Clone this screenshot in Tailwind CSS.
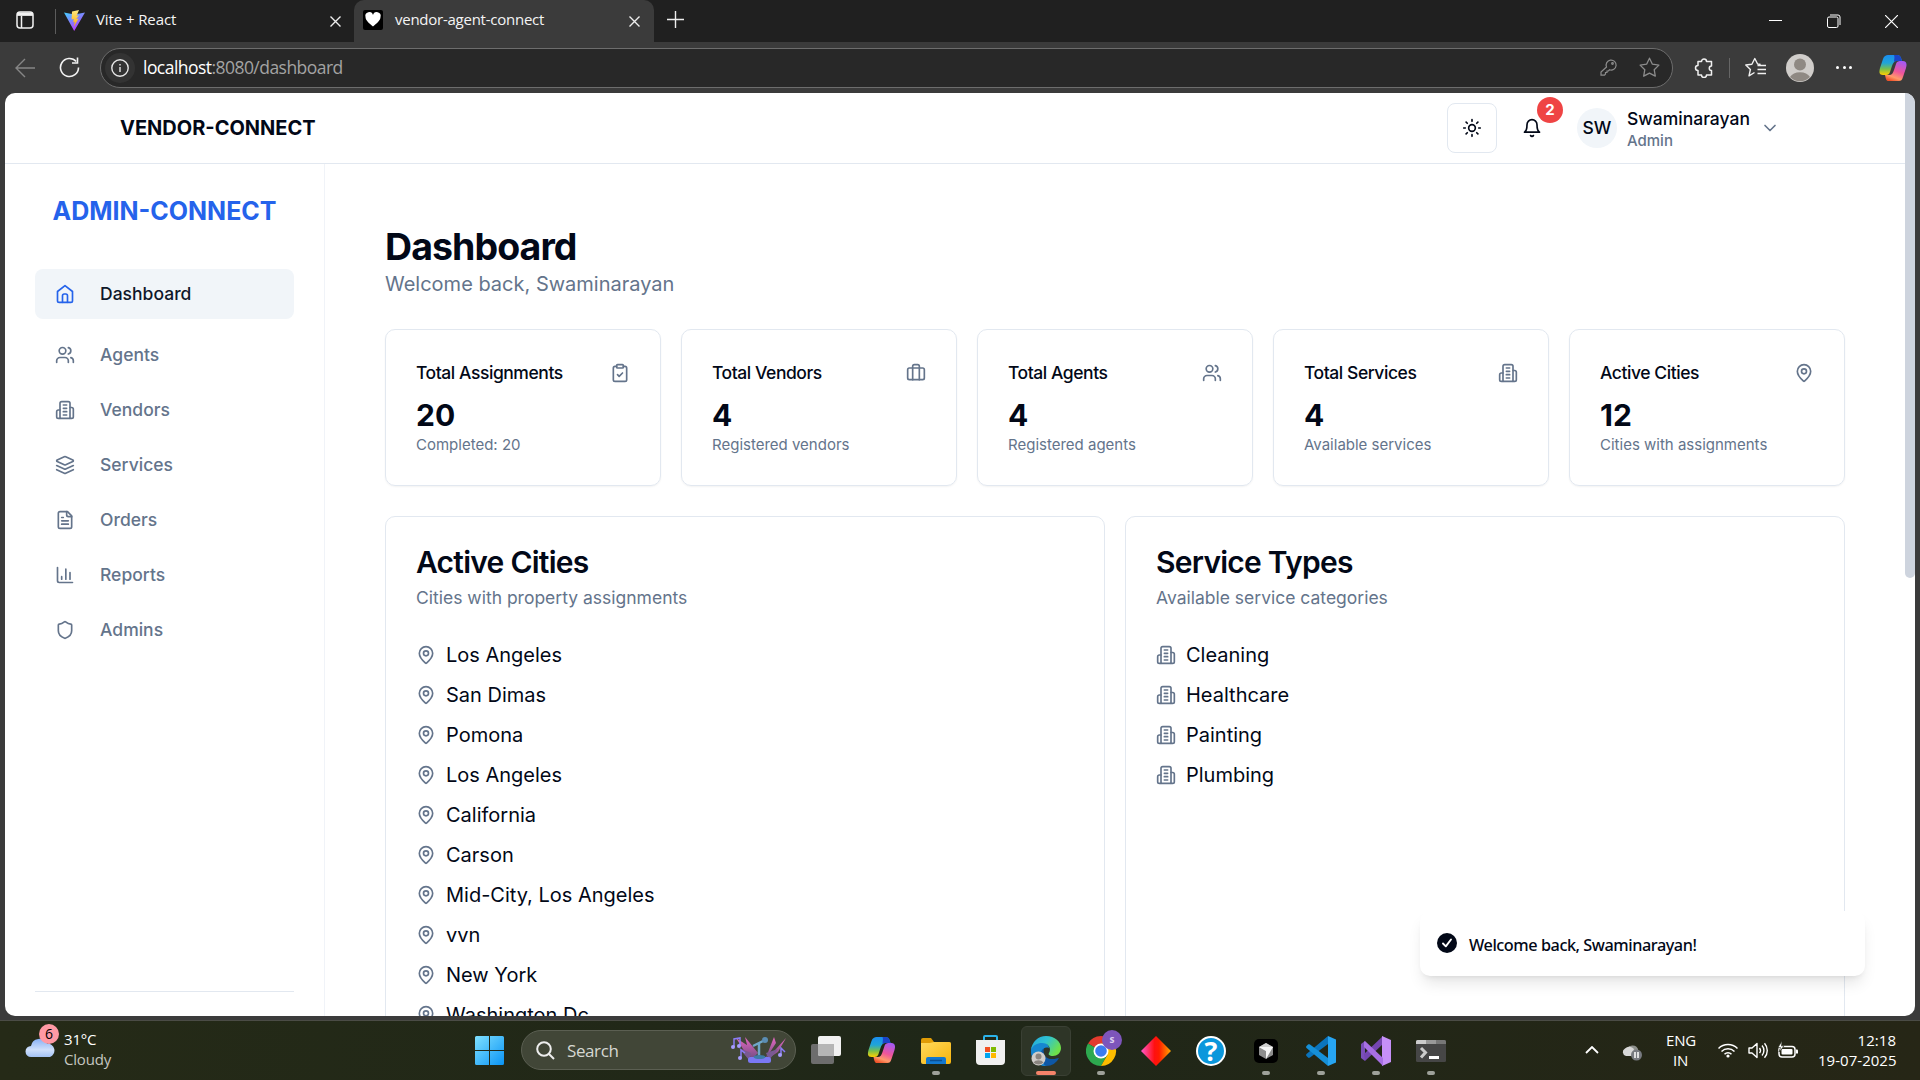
<!DOCTYPE html>
<html lang="en">
<head>
<meta charset="utf-8">
<title>vendor-agent-connect</title>
<script src="https://cdn.jsdelivr.net/npm/@tailwindcss/browser@4"></script>
</head>
<body class="w-[1920px] h-[1080px] overflow-hidden bg-[#3b3b3b] font-['Inter',sans-serif] flex flex-col">
<svg class="absolute size-0" xmlns="http://www.w3.org/2000/svg">
  <defs>
    <symbol id="house" viewBox="0 0 24 24"><path d="m3 9 9-7 9 7v11a2 2 0 0 1-2 2H5a2 2 0 0 1-2-2z"/><path d="M9 22V14a2 2 0 0 1 2-2h2a2 2 0 0 1 2 2v8"/></symbol>
    <symbol id="users" viewBox="0 0 24 24"><path d="M16 21v-2a4 4 0 0 0-4-4H6a4 4 0 0 0-4 4v2"/><circle cx="9" cy="7" r="4"/><path d="M22 21v-2a4 4 0 0 0-3-3.870"/><path d="M16 3.130a4 4 0 0 1 0 7.750"/></symbol>
    <symbol id="building" viewBox="0 0 24 24"><path d="M6 22V4a2 2 0 0 1 2-2h8a2 2 0 0 1 2 2v18Z"/><path d="M6 12H4a2 2 0 0 0-2 2v6a2 2 0 0 0 2 2h2"/><path d="M18 9h2a2 2 0 0 1 2 2v9a2 2 0 0 1-2 2h-2"/><path d="M10 6h4M10 10h4M10 14h4M10 18h4"/></symbol>
    <symbol id="layers" viewBox="0 0 24 24"><path d="m12.830 2.180a2 2 0 0 0-1.660 0L2.600 6.080a1 1 0 0 0 0 1.830l8.580 3.910a2 2 0 0 0 1.660 0l8.580-3.900a1 1 0 0 0 0-1.830Z"/><path d="m22 17.650-9.170 4.160a2 2 0 0 1-1.660 0L2 17.650"/><path d="m22 12.650-9.170 4.160a2 2 0 0 1-1.660 0L2 12.650"/></symbol>
    <symbol id="filetext" viewBox="0 0 24 24"><path d="M15 2H6a2 2 0 0 0-2 2v16a2 2 0 0 0 2 2h12a2 2 0 0 0 2-2V7Z"/><path d="M14 2v4a2 2 0 0 0 2 2h4M10 9H8M16 13H8M16 17H8"/></symbol>
    <symbol id="chart" viewBox="0 0 24 24"><path d="M3 3v16a2 2 0 0 0 2 2h16M18 17V9M13 17V5M8 17v-3"/></symbol>
    <symbol id="shield" viewBox="0 0 24 24"><path d="M20 13c0 5-3.500 7.500-7.660 8.950a1 1 0 0 1-.67-.01C7.500 20.500 4 18 4 13V6a1 1 0 0 1 1-1c2 0 4.500-1.200 6.240-2.720a1.170 1.170 0 0 1 1.520 0C14.510 3.810 17 5 19 5a1 1 0 0 1 1 1z"/></symbol>
    <symbol id="clipboard" viewBox="0 0 24 24"><rect width="8" height="4" x="8" y="2" rx="1"/><path d="M16 4h2a2 2 0 0 1 2 2v14a2 2 0 0 1-2 2H6a2 2 0 0 1-2-2V6a2 2 0 0 1 2-2h2"/><path d="m9 14 2 2 4-4"/></symbol>
    <symbol id="case" viewBox="0 0 24 24"><path d="M16 20V4a2 2 0 0 0-2-2h-4a2 2 0 0 0-2 2v16"/><rect width="20" height="14" x="2" y="6" rx="2"/></symbol>
    <symbol id="pin" viewBox="0 0 24 24"><path d="M20 10c0 4.993-5.539 10.193-7.399 11.799a1 1 0 0 1-1.202 0C9.539 20.193 4 14.993 4 10a8 8 0 0 1 16 0"/><circle cx="12" cy="10" r="3"/></symbol>
    <symbol id="sun" viewBox="0 0 24 24"><circle cx="12" cy="12" r="4"/><path d="M12 2v2M12 20v2m-7.070-17.070 1.410 1.410m11.320 11.320 1.410 1.410M2 12h2m16 0h2M6.340 17.660l-1.410 1.410M19.070 4.930l-1.410 1.410"/></symbol>
    <symbol id="bell" viewBox="0 0 24 24"><path d="M6 8a6 6 0 0 1 12 0c0 7 3 9 3 9H3s3-2 3-9"/><path d="M10.300 21a1.940 1.940 0 0 0 3.400 0"/></symbol>
    <symbol id="down" viewBox="0 0 24 24"><path d="m6 9 6 6 6-6"/></symbol>
    <symbol id="copilot" viewBox="0 0 28 26">
      <path d="M9 0h9c3 0 4 2 5 6h-5c-3 0-4 2-5 5l-2 6c-1 3-3 3-5 3H4c-4 0-4-3-3-7l3-9C5 1 7 0 9 0z" fill="url(#cpA)"/>
      <path d="M15 0h3c3 0 4 2 5 6h-5c-1 0-2 0-3 1 0-3 1-5 0-7z" fill="#1b44c8"/>
      <path d="M19 26h-9c-3 0-3-2-4-6h4c3 0 4-2 5-5l2-6c1-3 3-3 5-3h2c4 0 4 4 3 7l-3 9c-1 3-2 4-4 4z" fill="url(#cpB)"/>
    </symbol>
    <linearGradient id="cpA" x1="0" y1="0" x2="0" y2="1"><stop offset="0" stop-color="#1a8df0"/><stop offset=".4" stop-color="#20a5d8"/><stop offset=".7" stop-color="#79c04a"/><stop offset="1" stop-color="#ffd000"/></linearGradient>
    <linearGradient id="cpB" x1=".7" y1="0" x2=".3" y2="1"><stop offset="0" stop-color="#a559f2"/><stop offset=".5" stop-color="#f0559a"/><stop offset=".8" stop-color="#ff9a6a"/><stop offset="1" stop-color="#f0542a"/></linearGradient>
    <linearGradient id="vite" x1="0" y1="0" x2=".6" y2="1"><stop offset="0" stop-color="#41d1ff"/><stop offset="1" stop-color="#bd34fe"/></linearGradient>
    <linearGradient id="bolt" x1="0" y1="0" x2="0" y2="1"><stop offset="0" stop-color="#ffea83"/><stop offset="1" stop-color="#ffa800"/></linearGradient>
    <linearGradient id="win" x1="0" y1="0" x2="1" y2="1"><stop offset="0" stop-color="#7fe0ff"/><stop offset="1" stop-color="#0a94f5"/></linearGradient>
    <linearGradient id="cloud" x1="0" y1="0" x2="0" y2="1"><stop offset="0" stop-color="#88b0f4"/><stop offset=".6" stop-color="#cfe0fb"/><stop offset="1" stop-color="#a3c2f4"/></linearGradient>
    <linearGradient id="edgeTop" x1="0" y1="0" x2="1" y2=".5"><stop offset="0" stop-color="#22a5dc"/><stop offset=".5" stop-color="#2fc3d3"/><stop offset="1" stop-color="#6ee04a"/></linearGradient>
    <linearGradient id="diamond" x1="0" y1="0" x2="1" y2="0"><stop offset="0" stop-color="#ff5ad0"/><stop offset=".45" stop-color="#ff1010"/><stop offset=".6" stop-color="#ff1a00"/><stop offset="1" stop-color="#ffa800"/></linearGradient>
    <linearGradient id="folder" x1="0" y1="0" x2="1" y2="1"><stop offset="0" stop-color="#ffd95c"/><stop offset="1" stop-color="#f8b50c"/></linearGradient>
    <linearGradient id="leafA" x1="0" y1="0" x2="0" y2="1"><stop offset="0" stop-color="#e667c0"/><stop offset="1" stop-color="#6c4c80"/></linearGradient>
  </defs>
</svg>

<!-- Tab strip -->
<div class="h-[42px] bg-[#202020] flex items-center shrink-0 font-['Open_Sans','Noto_Sans',sans-serif] text-[15px] text-[#f4f4f4]">
  <svg class="ml-4 size-[18px] mt-[-2px]" viewBox="0 0 18 18" fill="none" stroke="#f2f2f2" stroke-width="1.500"><rect x="1" y="1" width="16" height="16" rx="3"/><path d="M1 4h16M5.500 5v12" /><path d="M1.500 3h15" stroke-width="3"/></svg>
  <div class="ml-[21px] w-px h-[25px] bg-[#5c5c5c]"></div>
  <svg class="ml-2 size-[21px] mt-[-2px]" viewBox="0 0 21 21"><path d="M0 2.500 10.200 21 21 2.500 10.500 4.500z" fill="url(#vite)"/><path d="M15 0 8 1.400 7.600 9.500l2.200-.5-.6 3.200 1.600-.5-1 5 4.800-8.200-2.400.4L15 5.300l-2.400.4z" fill="url(#bolt)"/></svg>
  <div class="ml-[11px] w-[229px] tracking-[-0.1px] mt-[-3px]">Vite + React</div>
  <svg class="ml-[5px] size-[11px]" viewBox="0 0 11 11" stroke="#eee" stroke-width="1.400"><path d="m.5.500 10 10M10.500.500l-10 10"/></svg>
  <div class="ml-[13px] w-[300px] h-[43px] bg-[#3b3b3b] rounded-t-[10px] flex items-center relative">
    <svg class="ml-[9px] size-5 mt-[-3px]" viewBox="0 0 20 20"><rect width="20" height="20" rx="2" fill="#000"/><path d="M10 16.500C6 13 2.500 10.500 2.500 7A3.700 3.700 0 0 1 10 5a3.700 3.700 0 0 1 7.500 2c0 3.500-3.500 6-7.500 9.500z" fill="#fff"/></svg>
    <div class="ml-3 w-[220px] tracking-[-0.25px] mt-[-3px]">vendor-agent-connect</div>
    <svg class="ml-[14px] size-[11px]" viewBox="0 0 11 11" stroke="#eee" stroke-width="1.400"><path d="m.5.500 10 10M10.500.500l-10 10"/></svg>
  </div>
  <svg class="ml-[13px] size-[17px] mt-[-3px]" viewBox="0 0 17 17" stroke="#eee" stroke-width="1.400"><path d="M8.500 0v17M0 8.500h17"/></svg>
  <svg class="ml-auto mr-[45px] size-[13px] mt-[-1px]" viewBox="0 0 13 13" stroke="#fff"><path d="M0 6.500h13"/></svg>
  <svg class="mr-[44px] size-[14px]" viewBox="0 0 14 14" fill="none" stroke="#fff"><rect x=".5" y="3" width="10.500" height="10.500" rx="1.500"/><path d="M3 1h8a2 2 0 0 1 2 2v8"/></svg>
  <svg class="mr-[22px] size-[13px]" viewBox="0 0 13 13" stroke="#fff" stroke-width="1.200"><path d="m0 0 13 13M13 0 0 13"/></svg>
</div>

<!-- Address row -->
<div class="h-[51px] shrink-0 flex items-center font-['Open_Sans','Noto_Sans',sans-serif]">
  <svg class="ml-[15px] size-5" viewBox="0 0 20 20" fill="none" stroke="#868686" stroke-width="1.400"><path d="M20 10H1M10 1 1 10l9 9"/></svg>
  <svg class="ml-[24px] size-[21px]" viewBox="0 0 21 21" fill="none" stroke="#f2f2f2" stroke-width="1.600"><path d="M19.500 10.500a9 9 0 1 1-2.300-6"/><path d="M18.500.500v5.500h-5.500"/></svg>
  <div class="ml-5 w-[1573px] h-10 rounded-full border border-[#6d6d6d] bg-[#282828] flex items-center">
    <div class="ml-1 size-[30px] rounded-full bg-[#333] flex items-center justify-center">
      <svg class="size-[18px]" viewBox="0 0 18 18" fill="none" stroke="#e6e6e6" stroke-width="1.400"><circle cx="9" cy="9" r="8.200"/><path d="M9 8v5M9 5v1.500"/></svg>
    </div>
    <div class="ml-2 text-[17.5px] tracking-[-0.54px] text-[#a3a3a3]"><span class="text-white">localhost</span>:8080/dashboard</div>
    <svg class="ml-auto mr-[22px] size-[17px]" viewBox="0 0 17 17" fill="none" stroke="#8c8c8c" stroke-width="1.200"><path d="M6.500 8A5 5 0 1 1 9.500 10.800L8.500 12H7v1.500H5.500V15l-1 1.200H1V13z"/><circle cx="12.500" cy="4.500" r=".8"/></svg>
    <svg class="mr-[12px] size-[21px]" viewBox="0 0 21 21" fill="none" stroke="#8c8c8c" stroke-width="1.300" stroke-linejoin="round"><path d="m10.500 1.200 2.900 6 6.500.9-4.700 4.600 1.100 6.500-5.800-3-5.800 3 1.100-6.500L1.100 8.100l6.500-.9z"/></svg>
  </div>
  <svg class="ml-[21px] size-5" viewBox="0 0 20 20" fill="none" stroke="#f0f0f0" stroke-width="1.500" stroke-linejoin="round"><path d="M4 3.500h3.500a2.500 2.500 0 0 1 5 0H17.500v4.500c-3 0-3 4.500 0 4.500v4.500h-5a2.500 2.500 0 0 1-5 0H4v-4.500a2.500 2.500 0 0 1 0-5z"/></svg>
  <div class="ml-[15px] w-px h-5 bg-[#666]"></div>
  <svg class="ml-[15px] size-[21px]" viewBox="0 0 21 21" fill="none" stroke="#f0f0f0" stroke-width="1.400" stroke-linejoin="round"><path d="M9.500 15.500 4 18.800l1.400-6.300L.8 8l6.100-.8L9.800 1.500l2.800 5.500 3 .5M12.500 8.500H21M12.500 12.500H21M12.500 16.500H21"/></svg>
  <svg class="ml-5 size-7" viewBox="0 0 28 28"><circle cx="14" cy="14" r="14" fill="#d0cdca"/><circle cx="14" cy="10.500" r="6" fill="#8f8983"/><path d="M4 23a11 8 0 0 1 20 0 14 14 0 0 1-20 0z" fill="#8f8983"/></svg>
  <div class="ml-[22px] flex gap-[3.500px]"><i class="size-[3px] rounded-full bg-white"></i><i class="size-[3px] rounded-full bg-white"></i><i class="size-[3px] rounded-full bg-white"></i></div>
  <svg class="ml-[27px] w-7 h-[26px]"><use href="#copilot"/></svg>
</div>

<!-- Page -->
<div class="mx-[5px] h-[923px] shrink-0 bg-white rounded-[10px] overflow-hidden relative flex text-[#020817]">
  <div class="flex-1 flex flex-col min-w-0">
    <header class="h-[71px] shrink-0 border-b border-[#e2e8f0] flex items-center pl-[115px] pr-[125px]">
      <div class="text-[20px] font-bold">VENDOR-CONNECT</div>
      <div class="ml-auto size-[50px] rounded-lg border border-[#e2e8f0] flex items-center justify-center">
        <svg class="size-5" fill="none" stroke="currentColor" stroke-width="2" stroke-linecap="round"><use href="#sun"/></svg>
      </div>
      <div class="relative ml-[25px]">
        <svg class="size-5" fill="none" stroke="currentColor" stroke-width="2" stroke-linecap="round" stroke-linejoin="round"><use href="#bell"/></svg>
        <div class="absolute left-[15px] top-[-21px] size-[26px] rounded-full bg-[#ef4444] text-white text-[15px] font-bold flex items-center justify-center">2</div>
      </div>
      <div class="ml-[35px] size-10 rounded-full bg-[#f1f5f9] flex items-center justify-center text-[17.5px] font-medium">SW</div>
      <div class="ml-[10px] w-[123px] pt-[5px]">
        <div class="text-[17.5px] leading-[17.5px] font-medium">Swaminarayan</div>
        <div class="mt-[4px] text-[15px] leading-5 font-medium text-[#64748b]">Admin</div>
      </div>
      <svg class="ml-[10px] size-5 text-[#64748b]" fill="none" stroke="currentColor" stroke-width="2" stroke-linecap="round" stroke-linejoin="round"><use href="#down"/></svg>
    </header>
    <div class="flex flex-1 min-h-0">
      <aside class="w-80 shrink-0 border-r border-[#f0f3f8] px-[30px] flex flex-col pb-[24px]">
        <div class="mt-[29px] h-[37px] text-[25px] leading-[37px] font-bold text-[#2563eb] text-center">ADMIN-CONNECT</div>
        <nav class="mt-[39px] flex flex-col text-[17.5px] font-medium tracking-[0.02px] text-[#64748b] [&_svg]:size-5 [&_svg]:-mt-px [&_svg]:fill-none [&_svg]:stroke-current [&_svg]:stroke-2">
          <a class="w-[259px] h-[50px] rounded-lg bg-[#f1f5f9] flex items-center gap-[25px] pl-5 text-[#0f172a]"><svg class="text-[#2563eb]" stroke-linecap="round" stroke-linejoin="round"><use href="#house"/></svg><span class="pt-px">Dashboard</span></a>
          <a class="mt-[11px] h-[50px] flex items-center gap-[25px] pl-5"><svg stroke-linecap="round" stroke-linejoin="round"><use href="#users"/></svg>Agents</a>
          <a class="mt-[5px] h-[50px] flex items-center gap-[25px] pl-5"><svg stroke-linecap="round" stroke-linejoin="round"><use href="#building"/></svg>Vendors</a>
          <a class="mt-[5px] h-[50px] flex items-center gap-[25px] pl-5"><svg stroke-linecap="round" stroke-linejoin="round"><use href="#layers"/></svg>Services</a>
          <a class="mt-[5px] h-[50px] flex items-center gap-[25px] pl-5"><svg stroke-linecap="round" stroke-linejoin="round"><use href="#filetext"/></svg>Orders</a>
          <a class="mt-[5px] h-[50px] flex items-center gap-[25px] pl-5"><svg stroke-linecap="round" stroke-linejoin="round"><use href="#chart"/></svg>Reports</a>
          <a class="mt-[5px] h-[50px] flex items-center gap-[25px] pl-5"><svg stroke-linecap="round" stroke-linejoin="round"><use href="#shield"/></svg>Admins</a>
        </nav>
        <div class="mt-auto h-px w-[259px] bg-[#e2e8f0]"></div>
      </aside>
      <main class="flex-1 min-w-0 pl-[60px] pr-[60px] pt-[60px] overflow-hidden">
        <h1 class="text-[37.5px] leading-[45px] font-bold tracking-[-0.94px]">Dashboard</h1>
        <p class="text-[20px] leading-[30px] text-[#64748b]">Welcome back, Swaminarayan</p>
        <div class="mt-[30px] grid grid-cols-5 gap-5 [&_svg]:size-5 [&_svg]:-mt-px [&_svg]:fill-none [&_svg]:stroke-[#64748b] [&_svg]:stroke-2">
          <div class="h-[157px] rounded-[10px] border border-[#e2e8f0] shadow-xs p-[30px]">
            <div class="flex items-center justify-between h-[27px] text-[17.5px] font-medium tracking-[-0.44px]">Total Assignments<svg stroke-linecap="round" stroke-linejoin="round"><use href="#clipboard"/></svg></div>
            <div class="mt-2 text-[30px] leading-10 font-bold">20</div>
            <div class="text-[15px] leading-5 text-[#64748b]">Completed: 20</div>
          </div>
          <div class="h-[157px] rounded-[10px] border border-[#e2e8f0] shadow-xs p-[30px]">
            <div class="flex items-center justify-between h-[27px] text-[17.5px] font-medium tracking-[-0.44px]">Total Vendors<svg stroke-linecap="round" stroke-linejoin="round"><use href="#case"/></svg></div>
            <div class="mt-2 text-[30px] leading-10 font-bold">4</div>
            <div class="text-[15px] leading-5 text-[#64748b]">Registered vendors</div>
          </div>
          <div class="h-[157px] rounded-[10px] border border-[#e2e8f0] shadow-xs p-[30px]">
            <div class="flex items-center justify-between h-[27px] text-[17.5px] font-medium tracking-[-0.44px]">Total Agents<svg stroke-linecap="round" stroke-linejoin="round"><use href="#users"/></svg></div>
            <div class="mt-2 text-[30px] leading-10 font-bold">4</div>
            <div class="text-[15px] leading-5 text-[#64748b]">Registered agents</div>
          </div>
          <div class="h-[157px] rounded-[10px] border border-[#e2e8f0] shadow-xs p-[30px]">
            <div class="flex items-center justify-between h-[27px] text-[17.5px] font-medium tracking-[-0.44px]">Total Services<svg stroke-linecap="round" stroke-linejoin="round"><use href="#building"/></svg></div>
            <div class="mt-2 text-[30px] leading-10 font-bold">4</div>
            <div class="text-[15px] leading-5 text-[#64748b]">Available services</div>
          </div>
          <div class="h-[157px] rounded-[10px] border border-[#e2e8f0] shadow-xs p-[30px]">
            <div class="flex items-center justify-between h-[27px] text-[17.5px] font-medium tracking-[-0.44px]">Active Cities<svg stroke-linecap="round" stroke-linejoin="round"><use href="#pin"/></svg></div>
            <div class="mt-2 text-[30px] leading-10 font-bold">12</div>
            <div class="text-[15px] leading-5 text-[#64748b]">Cities with assignments</div>
          </div>
        </div>
        <div class="mt-[30px] grid grid-cols-2 gap-5 [&_svg]:size-5 [&_svg]:fill-none [&_svg]:stroke-[#64748b] [&_svg]:stroke-2 [&_li]:flex [&_li]:items-center [&_li]:gap-[10px] [&_li]:h-[30px] [&_li]:text-[20px]">
          <section class="h-[600px] rounded-[10px] border border-[#e2e8f0] p-[30px]">
            <h2 class="text-[30px] leading-[30px] font-semibold tracking-[-0.75px]">Active Cities</h2>
            <p class="mt-[8px] text-[17.5px] leading-[25px] text-[#64748b]">Cities with property assignments</p>
            <ul class="mt-[30px] flex flex-col gap-[10px]">
              <li><svg stroke-linecap="round" stroke-linejoin="round"><use href="#pin"/></svg>Los Angeles</li>
              <li><svg stroke-linecap="round" stroke-linejoin="round"><use href="#pin"/></svg>San Dimas</li>
              <li><svg stroke-linecap="round" stroke-linejoin="round"><use href="#pin"/></svg>Pomona</li>
              <li><svg stroke-linecap="round" stroke-linejoin="round"><use href="#pin"/></svg>Los Angeles</li>
              <li><svg stroke-linecap="round" stroke-linejoin="round"><use href="#pin"/></svg>California</li>
              <li><svg stroke-linecap="round" stroke-linejoin="round"><use href="#pin"/></svg>Carson</li>
              <li><svg stroke-linecap="round" stroke-linejoin="round"><use href="#pin"/></svg>Mid-City, Los Angeles</li>
              <li><svg stroke-linecap="round" stroke-linejoin="round"><use href="#pin"/></svg>vvn</li>
              <li><svg stroke-linecap="round" stroke-linejoin="round"><use href="#pin"/></svg>New York</li>
              <li><svg stroke-linecap="round" stroke-linejoin="round"><use href="#pin"/></svg>Washington Dc</li>
            </ul>
          </section>
          <section class="h-[600px] rounded-[10px] border border-[#e2e8f0] p-[30px]">
            <h2 class="text-[30px] leading-[30px] font-semibold tracking-[-0.75px]">Service Types</h2>
            <p class="mt-[8px] text-[17.5px] leading-[25px] text-[#64748b]">Available service categories</p>
            <ul class="mt-[30px] flex flex-col gap-[10px]">
              <li><svg stroke-linecap="round" stroke-linejoin="round"><use href="#building"/></svg>Cleaning</li>
              <li><svg stroke-linecap="round" stroke-linejoin="round"><use href="#building"/></svg>Healthcare</li>
              <li><svg stroke-linecap="round" stroke-linejoin="round"><use href="#building"/></svg>Painting</li>
              <li><svg stroke-linecap="round" stroke-linejoin="round"><use href="#building"/></svg>Plumbing</li>
            </ul>
          </section>
        </div>
      </main>
    </div>
  </div>
  <div class="w-[10px] shrink-0"><div class="h-[485px] bg-[#ced4de] rounded-b-[5px]"></div></div>
  <div class="absolute right-[50px] bottom-10 w-[445px] h-[65px] rounded-[10px] bg-white shadow-[0_10px_15px_-3px_rgba(0,0,0,0.1),0_4px_6px_-4px_rgba(0,0,0,0.1)] flex items-center pl-[17px] font-['Noto_Sans',sans-serif] text-[16.25px] font-medium">
    <svg class="size-5 mt-[-1px]" viewBox="0 0 20 20"><circle cx="10" cy="10" r="10" fill="#020817"/><path d="m6 10.500 2.800 2.800L14 6.500" fill="none" stroke="#fff" stroke-width="1.900" stroke-linecap="round" stroke-linejoin="round"/></svg>
    <span class="ml-[12px] mt-[4px] tracking-[-0.45px]">Welcome back, Swaminarayan!</span>
  </div>
</div>
<div class="h-[4px] shrink-0"></div>

<!-- Taskbar -->
<div class="h-[60px] shrink-0 border-t border-[#4b4c46] bg-linear-to-r from-[#252a17] via-[#1f2718] to-[#262616] flex items-center font-['Open_Sans','Noto_Sans',sans-serif] text-[15px] text-white">
  <div class="relative ml-[25px] w-[30px] h-[24px] mt-[-12px]">
    <svg class="w-[30px] h-6 mt-1" viewBox="0 0 30 24"><path d="M6 20a5.500 5.500 0 0 1 0-11 8.500 8.500 0 0 1 16-2.500A7 7 0 0 1 25 20z" fill="url(#cloud)"/></svg>
    <div class="absolute left-[14px] top-[-9px] size-5 rounded-full bg-[#ff99a4] text-black text-[14px] leading-5 text-center">6</div>
  </div>
  <div class="ml-[9px] w-[411px] leading-5 tracking-[-0.2px] mt-[-4px]"><div>31°C</div><div class="text-[#c4c6c0]">Cloudy</div></div>
  <svg class="size-[29px]" viewBox="0 0 29 29" fill="url(#win)"><path d="M0 1.500A1.500 1.500 0 0 1 1.500 0H14v14H0zM15 0h12.500A1.500 1.500 0 0 1 29 1.500V14H15zM0 15h14v14H1.500A1.500 1.500 0 0 1 0 27.500zM15 15h14v12.500a1.500 1.500 0 0 1-1.500 1.500H15z"/></svg>
  <div class="ml-[17px] w-[275px] h-10 mt-[-1px] rounded-full border border-[#5b5f52] bg-[#414637] flex items-center">
    <svg class="ml-[14px] size-[19px]" viewBox="0 0 19 19" fill="none" stroke="#eee" stroke-width="2"><circle cx="8" cy="8" r="6.800"/><path d="m13 13 5 5"/></svg>
    <span class="ml-[12px] mt-[1px] text-[17px] tracking-[-0.4px] text-[#d6d8d2]">Search</span>
    <svg class="ml-auto mr-[8px] w-14 h-[28px]" viewBox="0 0 56 28">
      <path d="M19 24 5 2l14 9zM20 24 14 1l13 16zM34 24 43 1l2 6zM35 24 55 2l-8 14z" fill="url(#leafA)"/><path d="M18 24 8 12l12 5zM38 24l9-11-12 4z" fill="#7a5a92"/>
      <path d="M28 23V7M22 10l10-5" stroke="#6fa6c8" stroke-width="2.500"/><circle cx="34" cy="4" r="3" fill="#5b8db4"/>
      <rect x="17" y="21" width="23" height="6" rx="2.500" fill="#7b78f5"/><ellipse cx="28.500" cy="21" rx="6" ry="2" fill="#3e7ca8"/>
      <g fill="none" stroke="#8b7cf6" stroke-width="1.500"><path d="M3 11V3l6-1v8M10 22v-8l4 3M50 19v-7l4 4"/></g><g fill="#a79cff"><circle cx="2" cy="11" r="2"/><circle cx="8" cy="10" r="2"/><circle cx="9" cy="22" r="2"/><circle cx="49" cy="19" r="2"/></g>
    </svg>
  </div>
  <!-- Pinned apps, 50px slots -->
  <div class="ml-[5px] flex gap-[5px] items-center [&>div]:relative [&>div]:size-[50px] [&>div]:flex [&>div]:items-center [&>div]:justify-center [&_b]:absolute [&_b]:bottom-[1px] [&_b]:h-1 [&_b]:rounded-full">
    <div><svg class="w-[30px] h-[28px] mt-[-2px]" viewBox="0 0 30 28"><rect y="8" width="23" height="20" rx="2" fill="#6d6d6d"/><rect x="7" width="23" height="20" rx="2" fill="#f1f1f1"/><path d="M7 8h16v12H9a2 2 0 0 1-2-2z" fill="#b5b5b5"/></svg></div>
    <div><svg class="w-[29px] h-[26px] mt-[-2px]"><use href="#copilot"/></svg></div>
    <div><svg class="w-[30px] h-[26px]" viewBox="0 0 30 26"><path d="M0 2a2 2 0 0 1 2-2h8l3 4h15a2 2 0 0 1 2 2v4H0z" fill="#e09c06"/><path d="M0 5h9l4-1h15a2 2 0 0 1 2 2v18a2 2 0 0 1-2 2H2a2 2 0 0 1-2-2z" fill="url(#folder)"/><path d="M5 26v-5a2 2 0 0 1 2-2h16a2 2 0 0 1 2 2v5z" fill="#1378cf"/><path d="M9 22.500h12" stroke="#0b4f93" stroke-width="1.500"/></svg><b class="w-2 bg-[#9ea19a]"></b></div>
    <div><svg class="w-[29px] h-[30px] mt-[-1px] mr-[2px]" viewBox="0 0 29 30"><path d="M8 6V2a1 1 0 0 1 1-1h11a1 1 0 0 1 1 1v4" fill="none" stroke="#2bb3ea" stroke-width="2"/><path d="M0 5h29v21a4 4 0 0 1-4 4H4a4 4 0 0 1-4-4z" fill="#f0f0f0"/><path d="M9 12h5v5H9z" fill="#f25022"/><path d="M15 12h5v5h-5z" fill="#7fba00"/><path d="M9 18h5v5H9z" fill="#00a4ef"/><path d="M15 18h5v5h-5z" fill="#ffb900"/></svg></div>
    <div class="rounded-md bg-[#2e3527] border border-[#3a4034]"><svg class="size-[30px]" viewBox="0 0 30 30"><path d="M28 22A14.500 14.500 0 0 1 15 30C6 30 0 23 0 15c0-5 8-9 14-5-2 3-3 12 6 13 4 .5 6-1 8-1z" fill="#0e57a5"/><path d="M0 15C0 9 5 6 10 6c6 0 8 4 8 6-6-2-10 4-8 11 1 3 3 6 5 7C6 30 0 23 0 15z" fill="#1687d0"/><path d="M0 14C1 6 7 0 15 0c9 0 15 6 15 12 0 5-4 8-8 8-4 0-5-2-4-3 3-5-1-10-7-10C6 7 2 9 0 14z" fill="url(#edgeTop)"/><circle cx="7.500" cy="22.500" r="7" fill="#d0cdca"/><circle cx="7.500" cy="20.500" r="3" fill="#8a8580"/><path d="M2.500 26.500a5.500 4 0 0 1 10 0 7 7 0 0 1-10 0z" fill="#8a8580"/></svg><b class="w-5 bg-[#f5836a] !bottom-0"></b></div>
    <div><svg class="w-[36px] h-[36px] mt-[-6px] ml-[6px]" viewBox="0 0 36 36"><path d="M15 21 2 13.500A15 15 0 0 1 28 13.500H15z" fill="#e33b2e"/><path d="M15 21 2 13.500A15 15 0 0 0 15 36l6.500-11.500z" fill="#2da94f"/><path d="M15 21h0l6.500 3.700L15 36A15 15 0 0 0 28 13.500H15z" fill="#fdbd00"/><circle cx="15" cy="21" r="7.500" fill="#fff"/><circle cx="15" cy="21" r="5.800" fill="#3a7cf0"/><circle cx="26" cy="10" r="10" fill="#7d55bb"/><text x="26" y="13" font-size="10" font-weight="700" text-anchor="middle" fill="#dccdf0">s</text></svg><b class="w-2 bg-[#9ea19a]"></b></div>
    <div><svg class="size-[30px]" viewBox="0 0 30 30"><path d="m15 0 15 15-15 15L0 15z" fill="url(#diamond)"/></svg></div>
    <div><div class="size-[30px] rounded-full bg-[#0a97dc] border-[2px] border-white flex items-center justify-center text-[27px] font-bold leading-none">?</div></div>
    <div><svg class="size-6" viewBox="0 0 24 24"><rect width="24" height="24" rx="5" fill="#000"/><path d="m12 4 7 4v8l-7 4-7-4V8z" fill="#8d8d8d"/><path d="m5 8 7-4 7 4-7 4z" fill="#cfcfcf"/><path d="M5 8h14l-7 12v-8z" fill="#f4f4f4"/></svg><b class="w-2 bg-[#9ea19a]"></b></div>
    <div><svg class="size-[30px]" viewBox="0 0 30 30"><path d="m22 0 8 3.500v23L22 30z" fill="#27a5f2"/><path d="M22 0v8L4 21.500c-1 .6-1.500.4-2 0L.5 20c-.6-.8-.5-1.500 0-2z" fill="#0b74bd"/><path d="M22 30v-8L4 8.500C3 8 2.500 8 2 8.500L.5 10c-.6.800-.5 1.500 0 2z" fill="#1690d8"/></svg><b class="w-2 bg-[#9ea19a]"></b></div>
    <div><svg class="size-[30px]" viewBox="0 0 30 30"><path d="M0 8l4-3v20l-4-3z" fill="#7a4fb8"/><path d="M4 25 22 8V0L3 18z" fill="#7446b0"/><path d="m21 0 9 4v22l-9 4z" fill="#c690f8"/><path d="m3 6 1-1 18 17v8L3 11z" fill="#a76fe4"/></svg><b class="w-2 bg-[#9ea19a]"></b></div>
    <div><svg class="w-[30px] h-[22px]" viewBox="0 0 30 22"><rect width="30" height="22" rx="1.500" fill="#464646"/><path d="M0 1.500A1.500 1.500 0 0 1 1.500 0H10v4H0z" fill="#ccc"/><path d="M10 0h10v4H10z" fill="#999"/><path d="M20 0h8.500A1.500 1.500 0 0 1 30 1.500V4H20z" fill="#777"/><path d="m5 8 4.500 4.500L5 17.500" fill="none" stroke="#ccc" stroke-width="3"/><path d="M13 17.500h10" stroke="#fff" stroke-width="3"/></svg><b class="w-2 bg-[#9ea19a]"></b></div>
  </div>
  <!-- Tray -->
  <div class="ml-auto mr-6 flex items-center leading-5 mt-[-1px]">
    <svg class="w-[14px] h-2" viewBox="0 0 14 8" fill="none" stroke="#fff" stroke-width="1.800"><path d="m1 7 6-6 6 6"/></svg>
    <svg class="ml-[23px] w-5 h-[18px] mt-[3px]" viewBox="0 0 20 18"><path d="M5 5a6 5 0 0 1 11 1l1 7H5z" fill="#8f918c"/><path d="M4 13a4 4 0 0 1-1-7.500A6 6 0 0 1 12 6l-2 7z" fill="#d8d8d8"/><circle cx="14.500" cy="12" r="5.500" fill="#777a80"/><path d="M13 9v6M16 9v6" stroke="#fff" stroke-width="1.500"/></svg>
    <div class="ml-[24px] w-[29px] text-center tracking-[-0.2px]">ENG<br>IN</div>
    <svg class="ml-[23px] w-5 h-[15px]" viewBox="0 0 20 15" fill="none" stroke="#fff" stroke-width="1.500"><path d="M.5 5.500a13.500 13.500 0 0 1 19 0M3.500 8.500a9.300 9.300 0 0 1 13 0M6.500 11.300a5 5 0 0 1 7 0"/><circle cx="10" cy="13" r="1.600" fill="#fff" stroke="none"/></svg>
    <svg class="ml-[10px] w-5 h-[17px]" viewBox="0 0 20 17" fill="none" stroke="#fff" stroke-width="1.400" stroke-linejoin="round"><path d="M1 6h3l5-4.500v14L4 11H1zM11.500 6a4 4 0 0 1 0 5M14 3.500a7.500 7.500 0 0 1 0 10M16.500 1.200a11 11 0 0 1 0 14.600"/></svg>
    <svg class="ml-[10px] w-5 h-[17px] mt-[-2px]" viewBox="0 0 20 17"><rect x="1" y="5.500" width="16" height="10.500" rx="3" fill="none" stroke="#fff" stroke-width="1.500"/><rect x="3.500" y="8" width="11" height="5.500" rx="1" fill="#fff"/><path d="M18 8.500h1a1 1 0 0 1 1 1v3h-2z" fill="#fff"/><path d="M4 0 0 6.500h2.500L1 11l5-6H3.500z" fill="#fff" stroke="#222718" stroke-width=".6"/></svg>
    <div class="ml-[20px] w-[78px] text-right tracking-[0.03px] whitespace-nowrap">12:18<br>19-07-2025</div>
  </div>
</div>
</body>
</html>
